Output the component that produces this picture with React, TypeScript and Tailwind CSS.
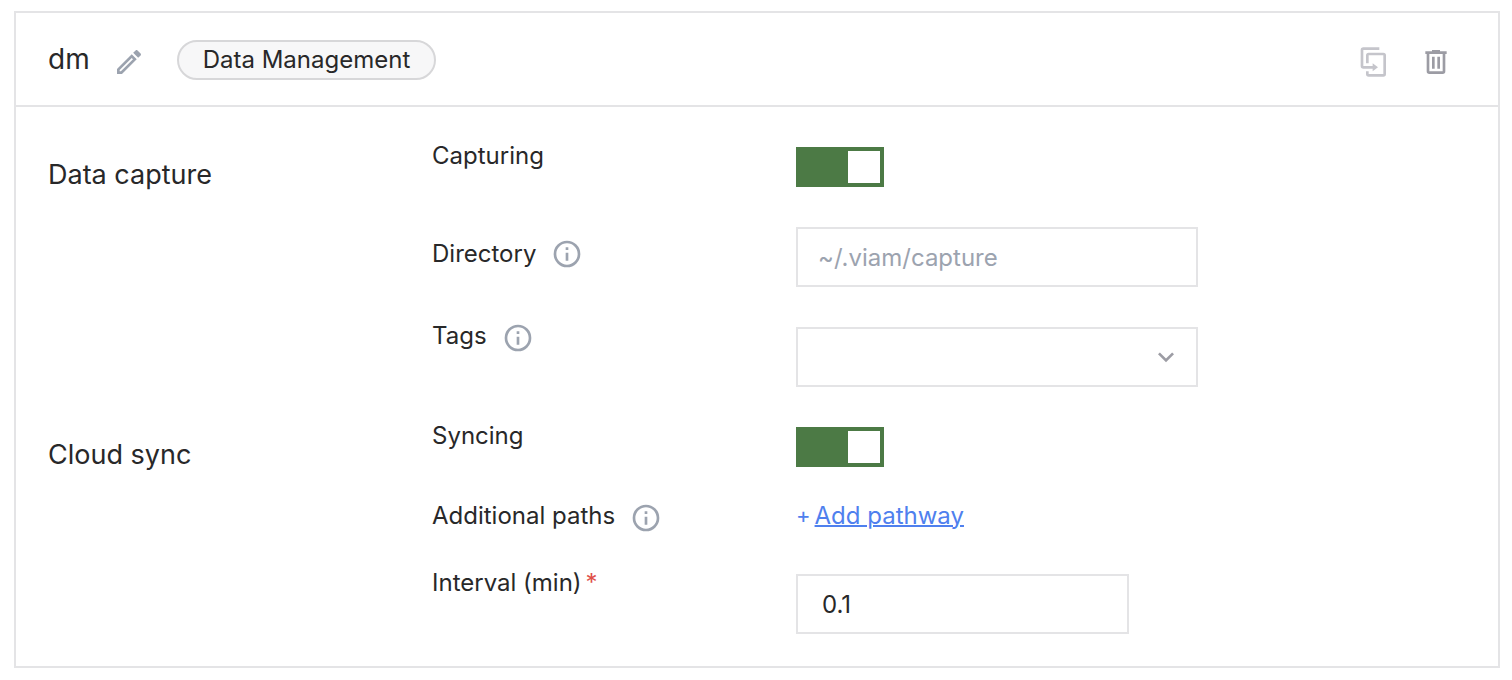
import { useState } from "react";
import type { ReactNode } from "react";

const icons = {
  pencil:
    "M14.06,9L15,9.94L5.92,19H5V18.08L14.06,9M17.66,3C17.41,3 17.15,3.1 16.96,3.29L15.13,5.12L18.88,8.87L20.71,7.04C21.1,6.65 21.1,6 20.71,5.63L18.37,3.29C18.17,3.09 17.92,3 17.66,3M14.06,6.19L3,17.25V21H6.75L17.81,9.94L14.06,6.19Z",
  duplicate:
    "M11,17H4A2,2 0 0,1 2,15V3A2,2 0 0,1 4,1H16V3H4V15H11V13L15,16L11,19V17M19,21V7H8V13H6V7A2,2 0 0,1 8,5H19A2,2 0 0,1 21,7V21A2,2 0 0,1 19,23H8A2,2 0 0,1 6,21V19H8V21H19Z",
  trash:
    "M9,3V4H4V6H5V19A2,2 0 0,0 7,21H17A2,2 0 0,0 19,19V6H20V4H15V3H9M7,6H17V19H7V6M9,8V17H11V8H9M13,8V17H15V8H13Z",
  info: "M11,9H13V7H11M12,20C7.59,20 4,16.41 4,12C4,7.59 7.59,4 12,4C16.41,4 20,7.59 20,12C20,16.41 16.41,20 12,20M12,2A10,10 0 0,0 2,12A10,10 0 0,0 12,22A10,10 0 0,0 22,12A10,10 0 0,0 12,2M11,17H13V11H11V17Z",
  chevron: "M7.41,8.58L12,13.17L16.59,8.58L18,10L12,16L6,10L7.41,8.58Z",
};

function Icon({ name }: { name: keyof typeof icons }) {
  return (
    <svg viewBox="0 0 24 24" className="size-8 shrink-0" fill="currentColor" aria-hidden="true">
      <path d={icons[name]} />
    </svg>
  );
}

function IconButton({ name, label, className }: { name: keyof typeof icons; label: string; className: string }) {
  return (
    <button type="button" aria-label={label} className={className}>
      <Icon name={name} />
    </button>
  );
}

function Section({ title, children }: { title: string; children: ReactNode }) {
  return (
    <section className="grid grid-cols-[minmax(0,384px)_minmax(0,1fr)]">
      <h2 className="pt-5 text-[27px] leading-8">{title}</h2>
      <div className="flex flex-col gap-8">{children}</div>
    </section>
  );
}

function Row({ label, children }: { label: ReactNode; children: ReactNode }) {
  return (
    <div className="grid grid-cols-[minmax(0,364px)_minmax(0,1fr)] items-start leading-[34px]">
      {label}
      {children}
    </div>
  );
}

function Toggle({ id }: { id: string }) {
  const [on, setOn] = useState(true);
  return (
    <div className="flex pt-2">
      <input
        id={id}
        type="checkbox"
        role="switch"
        checked={on}
        onChange={() => setOn(!on)}
        className="flex h-10 w-[88px] cursor-pointer appearance-none bg-[#9c9ca4] p-1 before:block before:size-8 before:bg-white checked:justify-end checked:bg-[#4c7a45]"
      />
    </div>
  );
}

export default function App() {
  const [directory, setDirectory] = useState("");
  const [interval, setIntervalValue] = useState("0.1");
  return (
    <main className="bg-white pt-[11px] pr-3 pb-3 pl-[14px] font-['Inter','Liberation_Sans',sans-serif] text-2xl text-[#282829]">
      <article className="border-2 border-[#e4e4e6]">
        <header className="flex items-center border-b-2 border-[#e4e4e6] px-8 pt-[27px] pb-[25px]">
          <h1 className="self-start text-[28px] leading-[38px]">dm</h1>
          <IconButton name="pencil" label="Edit name" className="mt-1 ml-[23px] text-[#9ca3af]" />
          <span className="ml-8 rounded-full border-2 border-[#d7d7d9] bg-[#f7f7f8] px-6 leading-9">
            Data Management
          </span>
          <div className="mt-1 ml-auto flex gap-[30px] pr-[14px]">
            <IconButton name="duplicate" label="Duplicate" className="text-[#c5c5cb]" />
            <IconButton name="trash" label="Delete" className="text-[#9c9ca4]" />
          </div>
        </header>

        <div className="flex flex-col gap-8 px-8 pt-8 pb-8">
          <Section title="Data capture">
            <Row label={<label htmlFor="capturing">Capturing</label>}>
              <Toggle id="capturing" />
            </Row>
            <Row
              label={
                <div className="flex items-center gap-[15px] pt-[18px]">
                  <label htmlFor="directory">Directory</label>
                  <IconButton name="info" label="About directory" className="text-[#9ca3af]" />
                </div>
              }
            >
              <div className="flex pt-2">
                <input
                  id="directory"
                  type="text"
                  value={directory}
                  onChange={(e) => setDirectory(e.target.value)}
                  placeholder="~/.viam/capture"
                  className="h-15 w-full max-w-[402px] border-2 border-[#e4e4e6] px-5 placeholder:text-[#9ca3af]"
                />
              </div>
            </Row>
            <Row
              label={
                <div className="flex items-start gap-[15px]">
                  <label htmlFor="tags">Tags</label>
                  <IconButton name="info" label="About tags" className="mt-[3px] text-[#9ca3af]" />
                </div>
              }
            >
              <div className="pt-2">
                <div className="relative max-w-[402px]">
                  <select
                    id="tags"
                    className="block h-15 w-full appearance-none border-2 border-[#e4e4e6] bg-white px-5"
                  >
                    <option value=""></option>
                  </select>
                  <span className="pointer-events-none absolute inset-y-0 right-4 flex items-center text-[#9c9ca4]">
                    <Icon name="chevron" />
                  </span>
                </div>
              </div>
            </Row>
          </Section>

          <Section title="Cloud sync">
            <Row label={<label htmlFor="syncing">Syncing</label>}>
              <Toggle id="syncing" />
            </Row>
            <Row
              label={
                <div className="flex items-start gap-[15px]">
                  <span>Additional paths</span>
                  <IconButton name="info" label="About additional paths" className="mt-[3px] text-[#9ca3af]" />
                </div>
              }
            >
              <button type="button" className="flex cursor-pointer gap-1 text-[#4f80ee]">
                <span className="text-[22px] leading-8">+</span>
                <span className="underline decoration-2">Add pathway</span>
              </button>
            </Row>
            <Row
              label={
                <label htmlFor="interval">
                  Interval (min)<span className="ml-1 text-[#e0504a]">*</span>
                </label>
              }
            >
              <div className="flex pt-2">
                <input
                  id="interval"
                  type="text"
                  inputMode="decimal"
                  required
                  value={interval}
                  onChange={(e) => setIntervalValue(e.target.value)}
                  className="h-15 w-full max-w-[333px] border-2 border-[#e4e4e6] px-6"
                />
              </div>
            </Row>
          </Section>
        </div>
      </article>
    </main>
  );
}
